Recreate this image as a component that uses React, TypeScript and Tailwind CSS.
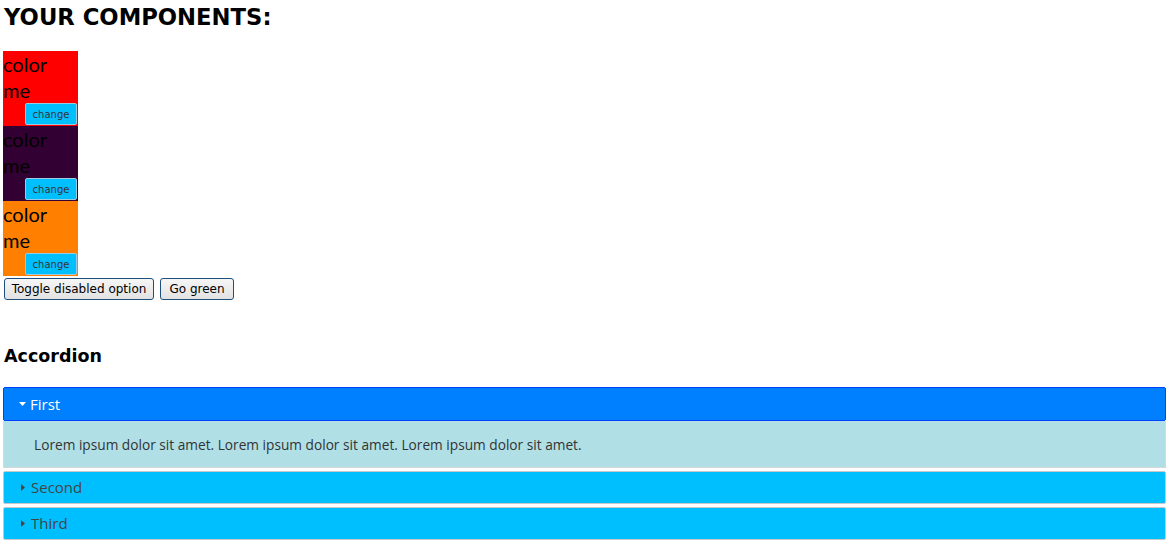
import React, { useState } from "react";

const boxes = ["bg-[#ff0000]", "bg-[#330033]", "bg-[#ff8000]"];

const ColorBox = ({ color }: { color: string }) => (
  <div className={`${color} w-[75px] h-[75px] flex flex-col`}>
    <span className="text-[20px] leading-[26px] text-black font-['Lato',sans-serif]">
      color me
    </span>
    <button className="mt-auto self-end mr-px mb-px w-[52px] h-[23px] bg-[#00bfff] border border-[#9ccbe0] rounded-[2px] text-[10px] text-[#333] font-['DejaVu_Sans',sans-serif]">
      change
    </button>
  </div>
);

const items = [
  { title: "First", body: "Lorem ipsum dolor sit amet. Lorem ipsum dolor sit amet. Lorem ipsum dolor sit amet." },
  { title: "Second", body: "Lorem ipsum dolor sit amet." },
  { title: "Third", body: "Lorem ipsum dolor sit amet." },
];

export default function App() {
  const [open, setOpen] = useState(0);

  return (
    <div className="w-[1171px] h-[543px] bg-white overflow-hidden font-['Open_Sans',sans-serif]">
      <h1 className="pl-1 text-[22.7px] leading-[34px] font-bold text-black font-['DejaVu_Sans',sans-serif]">
        YOUR COMPONENTS:
      </h1>
      <div className="pl-[3px] mt-[17px] flex flex-col">
        {boxes.map((c) => (
          <ColorBox key={c} color={c} />
        ))}
      </div>
      <div className="flex gap-[6px] pl-1 mt-[2px]">
        <button className="w-[150px] h-[22px] border border-[#1d4f7e] rounded-[3px] bg-gradient-to-b from-[#f6f6f6] to-[#e2e2e2] text-[12px] text-black font-['DejaVu_Sans',sans-serif]">
          Toggle disabled option
        </button>
        <button className="w-[74px] h-[22px] border border-[#1d4f7e] rounded-[3px] bg-gradient-to-b from-[#f6f6f6] to-[#e2e2e2] text-[12px] text-black font-['DejaVu_Sans',sans-serif]">
          Go green
        </button>
      </div>
      <h3 className="pl-1 mt-[44px] text-[17.5px] leading-[24px] font-bold text-black font-['DejaVu_Sans',sans-serif]">
        Accordion
      </h3>
      <div className="ml-[3px] w-[1163px] mt-[19px] flex flex-col gap-[3px]">
        {items.map((it, i) => {
          const isOpen = open === i;
          return (
            <div key={it.title}>
              <button
                onClick={() => setOpen(isOpen ? -1 : i)}
                className={`w-full flex items-center text-left rounded-[2px] border ${
                  isOpen
                    ? "h-[34px] bg-[#007fff] border-[#0040ff] text-white pl-[15px]"
                    : "h-[33px] bg-[#00bfff] border-[#c8c8c8] text-[#444] pl-[17px]"
                } text-[15px]`}
              >
                {isOpen ? (
                  <svg width="7" height="4" viewBox="0 0 7 4" className="mr-[4px]">
                    <path d="M0 0h7L3.5 4z" fill="currentColor" />
                  </svg>
                ) : (
                  <svg width="4" height="7" viewBox="0 0 4 7" className="mr-[6px]">
                    <path d="M0 0v7l4-3.5z" fill="currentColor" />
                  </svg>
                )}
                {it.title}
              </button>
              {isOpen && (
                <div className="h-[47px] bg-[#b0e0e6] border border-t-0 border-[#d8d8d8] flex items-center pl-[30px] pt-[3px] text-[13.7px] text-[#333]">
                  {it.body}
                </div>
              )}
            </div>
          );
        })}
      </div>
    </div>
  );
}
